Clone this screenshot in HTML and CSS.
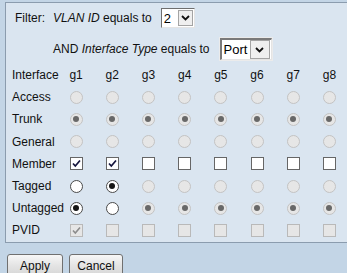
FILE: index.html
```html
<!DOCTYPE html>
<html>
<head>
<meta charset="utf-8">
<link rel="stylesheet" href="styles.css">
</head>
<body>
<div class="panel">
  <div class="filter-row">
    <span class="lbl">Filter:</span>
    <span><i>VLAN ID</i> equals to</span>
    <span class="select sel-vlan"><span class="val">2</span><span class="btn"><svg width="9" height="6" viewBox="0 0 9 6"><path d="M1 1 L4.5 4.5 L8 1" fill="none" stroke="#111" stroke-width="1.8"/></svg></span></span>
  </div>
  <div class="and-row">
    <span>AND <i>Interface Type</i> equals to</span>
    <span class="select sel-type"><span class="val">Port</span><span class="btn"><svg width="9" height="6" viewBox="0 0 9 6"><path d="M1 1 L4.5 4.5 L8 1" fill="none" stroke="#111" stroke-width="1.8"/></svg></span></span>
  </div>
  <div class="grid">
    <div class="rh">Interface</div>
    <div class="c">g1</div><div class="c">g2</div><div class="c">g3</div><div class="c">g4</div><div class="c">g5</div><div class="c">g6</div><div class="c">g7</div><div class="c">g8</div>

    <div class="rh">Access</div>
    <div class="c"><span class="radio dis"></span></div><div class="c"><span class="radio dis"></span></div><div class="c"><span class="radio dis"></span></div><div class="c"><span class="radio dis"></span></div><div class="c"><span class="radio dis"></span></div><div class="c"><span class="radio dis"></span></div><div class="c"><span class="radio dis"></span></div><div class="c"><span class="radio dis"></span></div>

    <div class="rh">Trunk</div>
    <div class="c"><span class="radio dis on"></span></div><div class="c"><span class="radio dis on"></span></div><div class="c"><span class="radio dis on"></span></div><div class="c"><span class="radio dis on"></span></div><div class="c"><span class="radio dis on"></span></div><div class="c"><span class="radio dis on"></span></div><div class="c"><span class="radio dis on"></span></div><div class="c"><span class="radio dis on"></span></div>

    <div class="rh">General</div>
    <div class="c"><span class="radio dis"></span></div><div class="c"><span class="radio dis"></span></div><div class="c"><span class="radio dis"></span></div><div class="c"><span class="radio dis"></span></div><div class="c"><span class="radio dis"></span></div><div class="c"><span class="radio dis"></span></div><div class="c"><span class="radio dis"></span></div><div class="c"><span class="radio dis"></span></div>

    <div class="rh">Member</div>
    <div class="c"><span class="check on"><svg width="11" height="11" viewBox="0 0 11 11"><path d="M2 5.5 L4.3 8 L9 2.5" fill="none" stroke="#14143c" stroke-width="1.7"/></svg></span></div>
    <div class="c"><span class="check on"><svg width="11" height="11" viewBox="0 0 11 11"><path d="M2 5.5 L4.3 8 L9 2.5" fill="none" stroke="#14143c" stroke-width="1.7"/></svg></span></div>
    <div class="c"><span class="check"></span></div><div class="c"><span class="check"></span></div><div class="c"><span class="check"></span></div><div class="c"><span class="check"></span></div><div class="c"><span class="check"></span></div><div class="c"><span class="check"></span></div>

    <div class="rh">Tagged</div>
    <div class="c"><span class="radio"></span></div><div class="c"><span class="radio on"></span></div><div class="c"><span class="radio dis"></span></div><div class="c"><span class="radio dis"></span></div><div class="c"><span class="radio dis"></span></div><div class="c"><span class="radio dis"></span></div><div class="c"><span class="radio dis"></span></div><div class="c"><span class="radio dis"></span></div>

    <div class="rh">Untagged</div>
    <div class="c"><span class="radio on"></span></div><div class="c"><span class="radio"></span></div><div class="c"><span class="radio dis on"></span></div><div class="c"><span class="radio dis on"></span></div><div class="c"><span class="radio dis on"></span></div><div class="c"><span class="radio dis on"></span></div><div class="c"><span class="radio dis on"></span></div><div class="c"><span class="radio dis on"></span></div>

    <div class="rh">PVID</div>
    <div class="c"><span class="check dis"><svg width="11" height="11" viewBox="0 0 11 11"><path d="M2 5.5 L4.3 8 L9 2.5" fill="none" stroke="#8c8c8c" stroke-width="1.6"/></svg></span></div>
    <div class="c"><span class="check dis"></span></div><div class="c"><span class="check dis"></span></div><div class="c"><span class="check dis"></span></div><div class="c"><span class="check dis"></span></div><div class="c"><span class="check dis"></span></div><div class="c"><span class="check dis"></span></div><div class="c"><span class="check dis"></span></div>
  </div>
</div>
<div class="buttons">
  <button class="b b-apply">Apply</button>
  <button class="b b-cancel">Cancel</button>
</div>
</body>
</html>
```
FILE: styles.css
```css
html, body {
  margin: 0;
  padding: 0;
  background: #c3d5e6;
  font-family: "Liberation Sans", Arial, sans-serif;
  font-size: 12px;
  color: #111;
  overflow: hidden;
}
.panel {
  margin: 2px 0 0 5px;
  background: #dae5f0;
  border: 1px solid #8b9cae;
  border-right: none;
  padding: 5px 0 0 6px;
  box-sizing: border-box;
  height: 241px;
}
.filter-row {
  display: flex;
  align-items: center;
  height: 20px;
  margin-left: 3px;
}
.filter-row .lbl { margin-right: 8px; }
.filter-row .sel-vlan { margin-left: 9px; }
.and-row {
  display: flex;
  align-items: center;
  height: 22px;
  margin-top: 10px;
  margin-left: 41px;
}
.and-row .sel-type { margin-left: 10px; }
.select {
  display: inline-flex;
  height: 20px;
  box-sizing: border-box;
  border: 1px solid #6f6f6f;
  border-right-color: #e4e4e4;
  border-bottom-color: #e4e4e4;
  background: #fff;
  font-size: 13px;
  color: #000;
}
.sel-type {
  height: 22px;
  outline: 1px solid #ebebeb;
  outline-offset: 0;
  border-top-width: 2px;
  border-left-width: 2px;
  border-top-color: #7a7a7a;
  border-left-color: #7a7a7a;
}
.select .val {
  display: flex;
  align-items: center;
  padding-left: 2px;
}
.sel-vlan .val { width: 13px; }
.sel-type .val { width: 26px; }
.select .btn {
  display: flex;
  align-items: center;
  justify-content: center;
  width: 15px;
  margin: 1px;
  background: #efefef;
  border: 1px solid #a4a4a4;
  box-sizing: border-box;
}
.sel-type .btn { width: 20px; margin: 0 1px 0 0; }
.grid {
  display: grid;
  grid-template-columns: 46px repeat(8, 36.2px);
  grid-auto-rows: 22.2px;
  margin-top: 4px;
}
.rh {
  display: flex;
  align-items: center;
}
.c {
  display: flex;
  align-items: center;
  justify-content: center;
}
.radio {
  width: 13px;
  height: 13px;
  box-sizing: border-box;
  border-radius: 50%;
  border: 1px solid #4a4a4a;
  background: #fff;
  display: flex;
  align-items: center;
  justify-content: center;
}
.radio.on::after {
  content: "";
  width: 6px;
  height: 6px;
  border-radius: 50%;
  background: #151515;
}
.radio.dis {
  border-color: #c3c3c3;
  background: #e6e6e6;
}
.radio.dis.on::after {
  width: 6px;
  height: 6px;
  background: #686868;
}
.check {
  width: 13px;
  height: 13px;
  box-sizing: border-box;
  border: 1px solid #666;
  background: #fff;
  display: flex;
  align-items: center;
  justify-content: center;
}
.check.dis {
  border-color: #b9b9b9;
  background: #e6e6e6;
}
.buttons {
  display: flex;
  gap: 6px;
  padding-left: 7px;
  margin-top: 11px;
}
.b {
  height: 23px;
  padding: 0;
  border: 1px solid #707070;
  border-radius: 3px;
  background: linear-gradient(#f7f7f7, #e4e4e4 50%, #d6d6d6);
  font-family: "Liberation Sans", Arial, sans-serif;
  font-size: 12px;
  color: #111;
}
.b-apply { width: 56px; }
.b-cancel { width: 54px; }
```
